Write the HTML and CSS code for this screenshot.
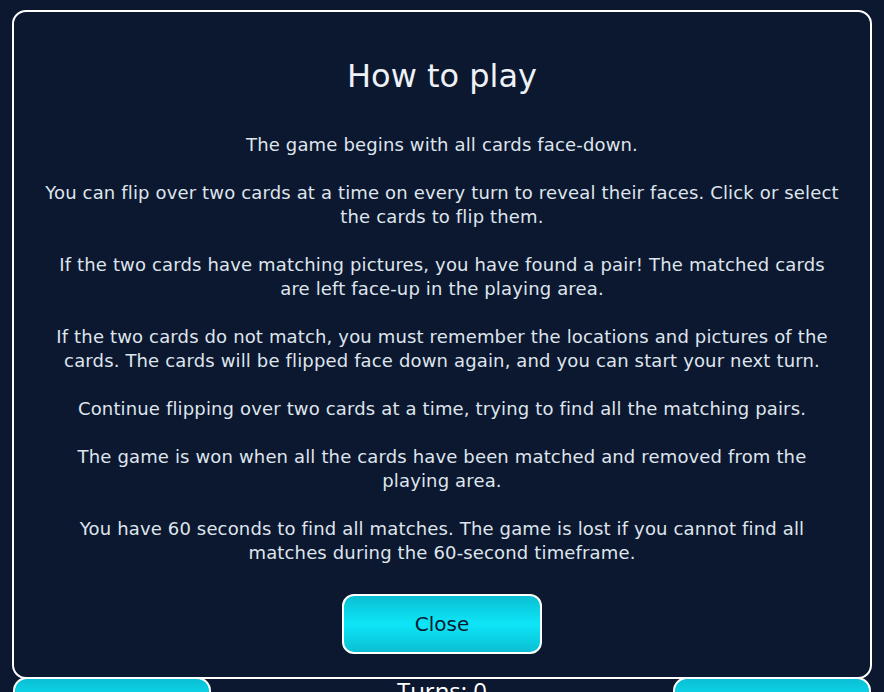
FILE: index.html
```html
<!DOCTYPE html>
<html lang="en">
<head>
<meta charset="utf-8">
<title>Memory Game</title>
<link rel="stylesheet" href="styles.css">
</head>
<body>
<div class="page">
  <div class="board"></div>
  <div class="controls">
    <button class="ctrl-btn" type="button">New game</button>
    <div class="turns">Turns: 0</div>
    <button class="ctrl-btn" type="button">Help</button>
  </div>
</div>

<div class="modal" role="dialog" aria-labelledby="howto-title">
  <h2 id="howto-title" class="modal-title">How to play</h2>
  <div class="modal-body">
    <p>The game begins with all cards face-down.</p>
    <p>You can flip over two cards at a time on every turn to reveal their faces. Click or select the cards to flip them.</p>
    <p>If the two cards have matching pictures, you have found a pair! The matched cards are left face-up in the playing area.</p>
    <p>If the two cards do not match, you must remember the locations and pictures of the cards. The cards will be flipped face down again, and you can start your next turn.</p>
    <p>Continue flipping over two cards at a time, trying to find all the matching pairs.</p>
    <p>The game is won when all the cards have been matched and removed from the playing area.</p>
    <p>You have 60 seconds to find all matches. The game is lost if you cannot find all matches during the 60-second timeframe.</p>
  </div>
  <button class="close-btn" type="button">Close</button>
</div>
</body>
</html>
```

FILE: styles.css
```css
html, body {
  margin: 0;
  padding: 0;
  background: #0c1830;
  height: 100%;
  overflow: hidden;
}

body {
  font-family: "DejaVu Sans", "Liberation Sans", sans-serif;
  color: #dfe5ec;
}

.page {
  padding: 0 13px;
}

.board {
  height: 677px;
}

.controls {
  display: flex;
  justify-content: space-between;
  align-items: flex-start;
}

.ctrl-btn {
  width: 198px;
  height: 60px;
  border: 2px solid #ffffff;
  border-radius: 14px;
  background: linear-gradient(to bottom, #0bbfd4 0%, #0de4f6 50%, #0bbfd4 100%);
  color: #0c1830;
  font-family: "DejaVu Sans", sans-serif;
  font-size: 18px;
}

.turns {
  font-family: "Open Sans", "DejaVu Sans", sans-serif;
  font-size: 24px;
  color: #ffffff;
  line-height: 1;
  padding-top: 2px;
}

.modal {
  position: fixed;
  left: 12px;
  top: 10px;
  width: 860px;
  height: 669px;
  box-sizing: border-box;
  border: 2px solid #ffffff;
  border-radius: 14px;
  background: #0c1830;
  padding: 44px 20px 0;
  display: flex;
  flex-direction: column;
  align-items: center;
  text-align: center;
}

.modal-title {
  margin: 0;
  font-size: 32px;
  font-weight: normal;
  line-height: 40px;
  color: #eef2f6;
}

.modal-body {
  width: 797px;
  margin-top: 37px;
  font-size: 18px;
  letter-spacing: 0.15px;
  line-height: 24px;
}

.modal-body p {
  margin: 0 0 24px;
}

.modal-body p:last-child {
  margin-bottom: 0;
}

.close-btn {
  margin-top: 29px;
  width: 200px;
  height: 60px;
  border: 2px solid #ffffff;
  border-radius: 12px;
  background: linear-gradient(to bottom, #0bbfd4 0%, #0de6f7 50%, #0bbfd4 100%);
  color: #0c1830;
  font-family: "DejaVu Sans", sans-serif;
  font-size: 20px;
  cursor: pointer;
}
```
